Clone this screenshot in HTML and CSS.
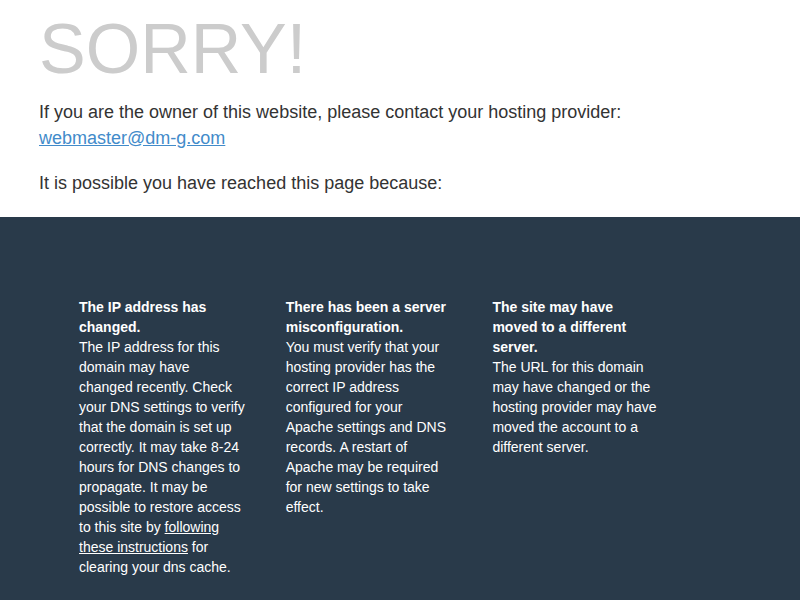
FILE: index.html
```html
<!DOCTYPE html>
<html lang="en">
<head>
    <meta charset="UTF-8">
    <title>Sorry!</title>
    <link rel="stylesheet" href="styles.css">
</head>
<body>

    <div class="container">
        <h1>SORRY!</h1>
        <p>If you are the owner of this website, please contact your hosting provider: <a href="mailto:webmaster@dm-g.com">webmaster@dm-g.com</a></p>
        <p>It is possible you have reached this page because:</p>
    </div>

    <div class="additional-info">
        <ul class="reason-list">
            <li>
                <strong>The IP address has changed.</strong>
                The IP address for this domain may have changed recently. Check your DNS settings to verify that the domain is set up correctly. It may take 8-24 hours for DNS changes to propagate. It may be possible to restore access to this site by <a href="#">following these instructions</a> for clearing your dns cache.
            </li>
            <li>
                <strong>There has been a server misconfiguration.</strong>
                You must verify that your hosting provider has the correct IP address configured for your Apache settings and DNS records. A restart of Apache may be required for new settings to take effect.
            </li>
            <li>
                <strong>The site may have moved to a different server.</strong>
                The URL for this domain may have changed or the hosting provider may have moved the account to a different server.
            </li>
        </ul>
    </div>

    <footer class="footer">
        Copyright &copy; cPanel, L.L.C.
    </footer>

</body>
</html>
```

FILE: styles.css
```css
html {
    overflow-y: scroll;
}
html, body {
    margin: 0;
    padding: 0;
}
body {
    font-family: "Liberation Sans", Arial, sans-serif;
    font-size: 14px;
    line-height: 1.428571;
    color: #333;
    background-color: #fff;
}
.container {
    padding: 0 39px;
}
h1 {
    font-size: 70px;
    font-weight: normal;
    line-height: 77px;
    color: #ccc;
    margin: 11px 0 12px;
}
.container p {
    font-size: 18px;
    margin: 0 0 20px;
}
.container a {
    color: #428bca;
}
.additional-info {
    background-color: #293a4a;
    color: #fff;
    padding: 81px 39px 80px;
}
.reason-list {
    list-style: none;
    margin: 0;
    padding: 0 0 0 40px;
    display: grid;
    grid-template-columns: repeat(3, 166.7px);
    column-gap: 40px;
    align-items: start;
}
.reason-list strong {
    display: block;
}
.reason-list a {
    color: #fff;
}
.footer {
    padding: 50px 39px;
    color: #999;
    font-size: 12px;
}
```
